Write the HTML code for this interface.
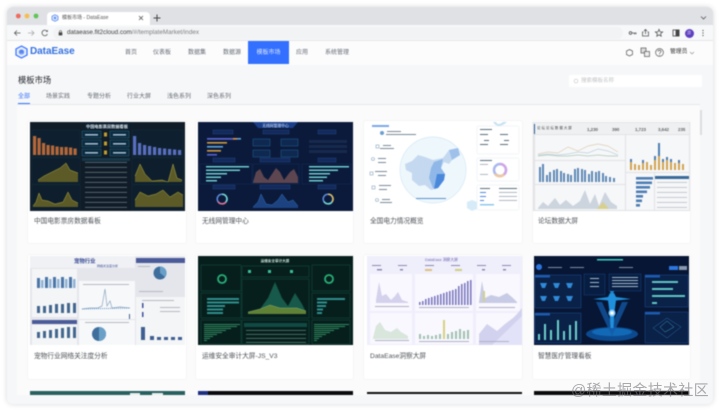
<!DOCTYPE html>
<html lang="zh"><head><meta charset="utf-8"><title>模板市场 - DataEase</title>
<style>
html,body{margin:0;padding:0;width:720px;height:412px;overflow:hidden;background:#fff}
body{font-family:"Liberation Sans","Noto Sans CJK SC",sans-serif;position:relative}
#w{position:absolute;left:7px;top:7px;width:706px;height:397px;border-radius:6px;background:#f6f7f8;box-shadow:0 0 6px rgba(0,0,0,.16);overflow:hidden;filter:blur(.45px)}
#o{position:absolute;left:-7px;top:-7px;width:720px;height:412px}
.a{position:absolute;white-space:nowrap;line-height:1}
.n{font-size:6px;color:#646a73;top:50px}
.t{font-size:6px;color:#646a73;top:94px}
.c{position:absolute;background:#fff;box-shadow:0 0 2px rgba(0,0,0,.07);border-radius:2px}
.l{position:absolute;font-size:6.7px;line-height:1;color:#4e5358;white-space:nowrap}
svg.h{position:absolute;display:block}
</style></head><body>
<div id="w"><div id="o">
<!-- tab strip -->
<div class="a" style="left:7px;top:7px;width:706px;height:18px;background:#dfe1e5"></div>
<svg class="h" style="left:14px;top:12px" width="28" height="8"><circle cx="4.3" cy="4" r="2.4" fill="#ee6a5f"/><circle cx="13" cy="4" r="2.4" fill="#f5bd4f"/><circle cx="22" cy="4" r="2.4" fill="#61c454"/></svg>
<div class="a" style="left:47px;top:11.500px;width:103px;height:13.500px;background:#fff;border-radius:4px 4px 0 0"></div>
<svg class="h" style="left:51px;top:14px" width="8" height="8" viewBox="0 0 8 8"><path d="M4 .7 7 2.300V5.700L4 7.300 1 5.700V2.300Z" fill="#dbe7ff" stroke="#5a8bf0" stroke-width=".8"/><circle cx="4" cy="4" r="1.200" fill="#5a8bf0"/></svg>
<div class="a" style="left:62px;top:16px;font-size:5px;color:#555">模板市场 - DataEase</div>
<svg class="h" style="left:138px;top:15px" width="6" height="6"><path d="M1 1 5 5M5 1 1 5" stroke="#555" stroke-width=".8"/></svg>
<svg class="h" style="left:153px;top:14px" width="8" height="8"><path d="M4 .5V7.500M.5 4H7.500" stroke="#444" stroke-width="1"/></svg>
<svg class="h" style="left:700px;top:15px" width="7" height="6"><path d="M1 1.500 3.500 4 6 1.500" fill="none" stroke="#555" stroke-width=".8"/></svg>
<!-- toolbar -->
<div class="a" style="left:7px;top:25px;width:706px;height:15px;background:#f7f8f9"></div>
<div class="a" style="left:7px;top:40px;width:706px;height:1px;background:#e6e7e9"></div>
<svg class="h" style="left:12px;top:28px" width="40" height="10" viewBox="0 0 40 10" fill="none"><path d="M8.500 5H2.500M5 2.500 2.500 5 5 7.500" stroke="#555" stroke-width=".8"/><path d="M16 5H22M19.500 2.500 22 5 19.500 7.500" stroke="#aaa" stroke-width=".8"/><path d="M35 3.200A2.800 2.800 0 1 0 35.400 6" stroke="#555" stroke-width=".8"/><path d="M35.800 1.800V3.900H33.700Z" fill="#555"/></svg>
<div class="a" style="left:53px;top:26.500px;width:570px;height:12px;background:#f1f3f4;border-radius:6px"></div>
<svg class="h" style="left:58px;top:29.500px" width="5" height="6" viewBox="0 0 5 6"><rect x=".7" y="2.400" width="3.600" height="3" fill="#444"/><path d="M1.500 2.500V1.500A1 1 0 0 1 3.500 1.500V2.500" fill="none" stroke="#444" stroke-width=".6"/></svg>
<div class="a" style="left:67px;top:30px;font-size:6.300px;color:#3f3f3f">dataease.fit2cloud.com<span style="color:#7c7f83">/#/templateMarket/index</span></div>
<svg class="h" style="left:628px;top:28px" width="82" height="10" viewBox="0 0 82 10" fill="none" stroke="#555" stroke-width=".8"><circle cx="2.500" cy="5" r="1.300"/><path d="M3.800 5H8.500M6.500 5V6.500M8 5V6.200"/><path d="M15.500 4H14.500V8H20.500V4H19.500M17.500 6V1.500M16 3 17.500 1.500 19 3"/><path d="M31 1.400 32 3.800 34.600 4 32.600 5.700 33.200 8.200 31 6.900 28.800 8.200 29.400 5.700 27.400 4 30 3.800Z"/><rect x="45" y="2" width="6" height="6" stroke="#444"/><rect x="48" y="2" width="3" height="6" fill="#444" stroke="#444"/></svg>
<div class="a" style="left:684.500px;top:28.500px;width:9px;height:9px;border-radius:50%;background:#5e3fc0"></div>
<div class="a" style="left:687px;top:31px;font-size:4px;color:#d8d0f5">游</div>
<svg class="h" style="left:701px;top:29px" width="4" height="8"><circle cx="2" cy="1.500" r=".6" fill="#444"/><circle cx="2" cy="4" r=".6" fill="#444"/><circle cx="2" cy="6.500" r=".6" fill="#444"/></svg>
<!-- nav -->
<div class="a" style="left:7px;top:41px;width:706px;height:24px;background:#fcfcfd"></div>
<svg class="h" style="left:15px;top:45px" width="13" height="14" viewBox="0 0 13 14"><path d="M6.500 1 12 4V10L6.500 13 1 10V4Z" fill="#e8efff" stroke="#3370ff" stroke-width="1.200"/><circle cx="6.500" cy="7" r="2.800" fill="#7ea6f8"/><path d="M4.500 6.500 6.500 5.500 8.500 6.500M4.500 8 6.500 7 8.500 8" stroke="#2a5fe0" stroke-width=".6" fill="none"/></svg>
<div class="a" style="left:30px;top:47px;font-size:10px;font-weight:700;color:#3370e0;letter-spacing:-.05px;font-family:'Liberation Sans',sans-serif">DataEase</div>
<div class="a n" style="left:125px">首页</div>
<div class="a n" style="left:153px">仪表板</div>
<div class="a n" style="left:188px">数据集</div>
<div class="a n" style="left:223px">数据源</div>
<div class="a" style="left:248px;top:41px;width:41px;height:23px;background:#3370ff"></div>
<div class="a n" style="left:256.500px;color:#dbe6ff">模板市场</div>
<div class="a n" style="left:296px">应用</div>
<div class="a n" style="left:325px">系统管理</div>
<svg class="h" style="left:624px;top:47px" width="70" height="11" viewBox="0 0 70 11" fill="none" stroke="#555" stroke-width=".7"><path d="M5.500 2.500 8.500 4V7.500L5.500 9 2.500 7.500V4Z"/><rect x="17" y="1" width="5" height="5" fill="#ddd"/><rect x="20.500" y="4.500" width="5" height="5" fill="#eee"/><circle cx="35.500" cy="5.500" r="3.900"/><path d="M34 4.500C34 2.800 37 2.800 37 4.500 37 5.500 35.500 5.500 35.500 7M35.500 7.800V8.500"/></svg>
<div class="a" style="left:670px;top:50px;font-size:5.800px;color:#333">管理员</div>
<svg class="h" style="left:689px;top:50.500px" width="6" height="4"><path d="M1 1 3 3 5 1" fill="none" stroke="#888" stroke-width=".6"/></svg>
<!-- title -->
<div class="a" style="left:18px;top:76px;font-size:8.300px;color:#24282e">模板市场</div>
<div class="a" style="left:569px;top:75px;width:133px;height:12px;background:#fff;border-radius:1px"></div>
<svg class="h" style="left:573px;top:78px" width="6" height="6"><circle cx="3" cy="3" r="1.900" fill="none" stroke="#bbb" stroke-width=".5"/></svg>
<div class="a" style="left:581px;top:78.500px;font-size:5.500px;color:#c3c5c8">搜索模板名称</div>
<div class="a t" style="left:18px;color:#3370ff">全部</div>
<div class="a t" style="left:46px">场景实践</div>
<div class="a t" style="left:87px">专题分析</div>
<div class="a t" style="left:127px">行业大屏</div>
<div class="a t" style="left:167px">浅色系列</div>
<div class="a t" style="left:207px">深色系列</div>
<div class="a" style="left:17px;top:104px;width:683px;height:1px;background:#e6e8ea"></div>
<div class="a" style="left:18px;top:103px;width:12px;height:1.200px;background:#3370ff"></div>
<div class="a" style="left:700px;top:110px;width:2px;height:25px;background:#dcdddf"></div>
<!-- content panel -->
<div class="a" style="left:17px;top:105px;width:683px;height:290px;background:#fbfbfc"></div>
<!-- cards -->
<div class="c" style="left:28px;top:121px;width:158px;height:122px"></div>
<div class="c" style="left:196px;top:121px;width:157px;height:122px"></div>
<div class="c" style="left:364px;top:121px;width:158px;height:122px"></div>
<div class="c" style="left:533px;top:121px;width:157px;height:122px"></div>
<div class="c" style="left:28px;top:255px;width:158px;height:124px"></div>
<div class="c" style="left:196px;top:255px;width:157px;height:124px"></div>
<div class="c" style="left:364px;top:255px;width:158px;height:124px"></div>
<div class="c" style="left:533px;top:255px;width:157px;height:124px"></div>

<!-- thumb 1 -->
<svg class="h" style="left:30px;top:122px" width="155" height="89" viewBox="0 0 155 89">
<rect width="155" height="89" fill="#101c28"/>
<rect x="55" y="1" width="45" height="6" fill="#0c2030"/>
<text x="77" y="6" font-size="4.200" fill="#dfe8ef" text-anchor="middle" font-weight="700">中国电影票房数据看板</text>
<rect x="2" y="8" width="48" height="27" fill="#0e2030" stroke="#16384a" stroke-width=".3"/>
<rect x="102" y="8" width="51" height="27" fill="#0e2030" stroke="#16384a" stroke-width=".3"/>
<rect x="2" y="36" width="48" height="26" fill="#0e1e2c" stroke="#16384a" stroke-width=".3"/>
<rect x="2" y="63" width="48" height="25" fill="#0e1e2c" stroke="#16384a" stroke-width=".3"/>
<rect x="102" y="36" width="51" height="26" fill="#0e1e2c" stroke="#16384a" stroke-width=".3"/>
<rect x="102" y="63" width="51" height="25" fill="#0e1e2c" stroke="#16384a" stroke-width=".3"/>
<g fill="#b5683a"><rect x="3" y="14" width="3.200" height="19"/><rect x="7.500" y="16" width="3.200" height="17"/><rect x="12" y="21" width="3.200" height="12"/><rect x="16.500" y="23" width="3.200" height="10"/><rect x="21" y="23.500" width="3.200" height="9.500"/><rect x="25.500" y="24.500" width="3.200" height="8.500"/><rect x="30" y="25" width="3.200" height="8"/><rect x="34.500" y="25" width="3.200" height="8"/><rect x="39" y="25.500" width="3.200" height="7.500"/><rect x="43.500" y="26.500" width="3.200" height="6.500"/></g>
<g fill="#5a6fc0"><rect x="103" y="14" width="3.200" height="19"/><rect x="108" y="21" width="3.200" height="12"/><rect x="113" y="23" width="3.200" height="10"/><rect x="118" y="24" width="3.200" height="9"/><rect x="123" y="25" width="3.200" height="8"/><rect x="128" y="26" width="3.200" height="7"/><rect x="133" y="26.500" width="3.200" height="6.500"/><rect x="138" y="27" width="3.200" height="6"/><rect x="143" y="27.500" width="3.200" height="5.500"/><rect x="148" y="28" width="3.200" height="5"/></g>
<g fill="#0c2a40" stroke="#2a7a90" stroke-width=".4"><rect x="52" y="9" width="19" height="7"/><rect x="80" y="9" width="19" height="7"/><rect x="52" y="18" width="19" height="7"/><rect x="80" y="18" width="19" height="7"/><rect x="52" y="27" width="19" height="7"/><rect x="80" y="27" width="19" height="7"/></g>
<g fill="#c0a030"><rect x="74" y="10.500" width="3" height="4"/><rect x="74" y="19.500" width="3" height="4"/><rect x="74" y="28.500" width="3" height="4"/></g>
<g fill="#9fb8c8"><rect x="55" y="12" width="13" height="1.600"/><rect x="83" y="12" width="13" height="1.600"/><rect x="55" y="21" width="13" height="1.600"/><rect x="83" y="21" width="13" height="1.600"/><rect x="55" y="30" width="13" height="1.600"/><rect x="83" y="30" width="13" height="1.600"/></g>
<path d="M8 58 14 54 22 50 30 46 36 41 40 48 48 51V60H8Z" fill="#5c5b28"/><path d="M8 58 14 54 22 50 30 46 36 41 40 48 48 51" fill="none" stroke="#b0a840" stroke-width=".5"/>
<path d="M3 84 6 80 9 71 12 78 18 79 25 82 33 80 38 70 42 78 48 81V85H3Z" fill="#5c5b28"/><path d="M3 84 6 80 9 71 12 78 18 79 25 82 33 80 38 70 42 78 48 81" fill="none" stroke="#b0a840" stroke-width=".5"/>
<path d="M105 54 110 42 115 52 122 59 132 58 138 60 143 42 147 56 152 58V60H105Z" fill="#5c5b28"/><path d="M105 54 110 42 115 52 122 59 132 58 138 60 143 42 147 56 152 58" fill="none" stroke="#b0a840" stroke-width=".5"/>
<path d="M105 78 110 70 118 74 126 72 133 68 140 75 148 70 153 73V85H105Z" fill="#5c5b28"/><path d="M105 78 110 70 118 74 126 72 133 68 140 75 148 70 153 73" fill="none" stroke="#b0a840" stroke-width=".5"/>
<rect x="52" y="36" width="48" height="3" fill="#16384a"/>
<g fill="#6e7e88"><rect x="55" y="40" width="42" height=".7"/><rect x="55" y="45" width="42" height=".7"/><rect x="55" y="50" width="42" height=".7"/><rect x="55" y="55" width="42" height=".7"/><rect x="55" y="60" width="42" height=".7"/><rect x="55" y="65" width="42" height=".7"/><rect x="55" y="70" width="42" height=".7"/><rect x="55" y="75" width="42" height=".7"/><rect x="55" y="80" width="42" height=".7"/><rect x="55" y="85" width="42" height=".7"/></g>
</svg>
<!-- thumb 2 -->
<svg class="h" style="left:198px;top:122px" width="155" height="89" viewBox="0 0 155 89">
<rect width="155" height="89" fill="#0b1a3a"/>
<path d="M55 0H100L95 6H60Z" fill="#1b3f88"/>
<text x="77.500" y="5" font-size="3.800" fill="#d4e4ff" text-anchor="middle">无线网管理中心</text>
<g fill="#142a5c" stroke="#2a5aa8" stroke-width=".3"><rect x="15" y="8" width="20" height="4"/><rect x="65" y="8" width="26" height="4"/><rect x="120" y="8" width="18" height="4"/><rect x="15" y="36" width="22" height="4"/><rect x="62" y="36" width="30" height="4"/><rect x="120" y="36" width="18" height="4"/><rect x="15" y="63" width="22" height="4"/><rect x="62" y="63" width="30" height="4"/><rect x="120" y="63" width="18" height="4"/></g>
<g><rect x="9" y="16" width="34" height="1.600" fill="#5ea5d8"/><rect x="9" y="16" width="26" height="1.600" fill="#5a60d0"/><rect x="35" y="16" width="4" height="1.600" fill="#e09040"/><rect x="9" y="20" width="20" height="1.600" fill="#d09a40"/><rect x="9" y="24" width="16" height="1.600" fill="#5ea5d8"/><rect x="9" y="28" width="14" height="1.600" fill="#d09a40"/><rect x="9" y="32" width="10" height="1.600" fill="#5a60d0"/></g>
<g fill="#0e2850" stroke="#2c70a8" stroke-width=".4"><rect x="55" y="17" width="17" height="7"/><rect x="83" y="17" width="17" height="7"/><rect x="55" y="28" width="17" height="7"/><rect x="83" y="28" width="17" height="7"/></g>
<g fill="#16294f"><rect x="111" y="18" width="38" height="3"/><rect x="111" y="23" width="38" height="3"/><rect x="111" y="28" width="38" height="3"/></g>
<g fill="#6fcdd0"><rect x="8" y="44" width="43" height="1.500"/><rect x="8" y="47.500" width="34" height="1.500"/><rect x="8" y="51" width="21" height="1.500"/><rect x="8" y="54.500" width="15" height="1.500"/><rect x="8" y="58" width="11" height="1.500"/><rect x="111" y="44" width="40" height="1.500"/><rect x="111" y="47.500" width="29" height="1.500"/><rect x="111" y="51" width="21" height="1.500"/><rect x="111" y="54.500" width="18" height="1.500"/><rect x="111" y="58" width="14" height="1.500"/></g>
<path d="M55 60 58 50 62 47 66 55 70 58 74 52 78 46 82 50 86 58 92 50 96 47 100 55V61H55Z" fill="#5e4650"/>
<path d="M55 85 60 80 63 72 68 82 74 83 80 78 84 72 90 80 95 78 100 84V86H55Z" fill="#1c4280"/>
<path d="M55 85 60 80 63 72 68 82 74 83 80 78 84 72 90 80 95 78 100 84" fill="none" stroke="#3a80d0" stroke-width=".4"/>
<circle cx="24" cy="77" r="4.800" fill="none" stroke="#5e8de0" stroke-width="1.500"/><path d="M24 72.200A4.800 4.800 0 0 1 28 80" fill="none" stroke="#70dcd0" stroke-width="1.500"/><path d="M28 80A4.800 4.800 0 0 1 20 79.500" fill="none" stroke="#e07090" stroke-width="1.500"/>
<circle cx="130" cy="77" r="4.800" fill="none" stroke="#5e8de0" stroke-width="1.500"/><path d="M130 72.200A4.800 4.800 0 0 1 134 80" fill="none" stroke="#e0c060" stroke-width="1.500"/><path d="M134 80A4.800 4.800 0 0 1 126 79.500" fill="none" stroke="#70dcd0" stroke-width="1.500"/>
<rect x="2" y="42" width="52" height="20" fill="none" stroke="#1a3a70" stroke-width=".3"/><rect x="55" y="42" width="46" height="20" fill="none" stroke="#1a3a70" stroke-width=".3"/><rect x="104" y="42" width="49" height="20" fill="none" stroke="#1a3a70" stroke-width=".3"/>
</svg>
<!-- thumb 3 -->
<svg class="h" style="left:365px;top:122px" width="156" height="89" viewBox="0 0 156 89">
<rect width="156" height="89" fill="#fff"/>
<circle cx="68" cy="48" r="33" fill="#eef7fc" stroke="#d5e9f5" stroke-width=".7"/>
<path d="M40 42 47 39 53 33 60 35 68 38 78 36 84 28 93 26 95 33 87 38 84 42 79 40 76 46 80 52 79 58 73 66 66 68 60 63 54 64 47 58 47 51 41 48Z" fill="#c4d9f0"/>
<path d="M69 40 78 37 76 46 80 52 79 58 73 66 68 66 64 56 66 46Z" fill="#8fb8e8"/>
<path d="M72 52 80 52 79 58 73 66 69 67Z" fill="#4a88dc"/>
<path d="M84 28 93 26 95 33 87 38Z" fill="#9fc0ea"/>
<rect x="7" y="3" width="17" height="2" fill="#7aa8e8"/>
<circle cx="17" cy="11" r="2" fill="#6a9fd0"/>
<g fill="#7a8a99"><rect x="22" y="9" width="14" height="1"/><rect x="21" y="12" width="30" height="1"/><rect x="18" y="23" width="8" height="1"/><rect x="15" y="26" width="14" height="1"/><rect x="13" y="36" width="8" height="1"/><rect x="13" y="40" width="8" height="1"/><rect x="10" y="49" width="12" height="1"/><rect x="13" y="53" width="8" height="1"/><rect x="14" y="63" width="12" height="1"/><rect x="14" y="67" width="8" height="1"/><rect x="17" y="77" width="8" height="1"/><rect x="15" y="80" width="12" height="1"/></g>
<g fill="none" stroke="#8aa4bc" stroke-width=".6"><rect x="11" y="23" width="3" height="3"/><circle cx="8" cy="37" r="1.500"/><rect x="5" y="50" width="3" height="3"/><rect x="7" y="64" width="3" height="3"/><circle cx="12" cy="78" r="1.500"/></g>
<rect x="112" y="4" width="42" height="28" rx="1.500" fill="#fff" stroke="#e4ecf2" stroke-width=".5"/>
<rect x="112" y="36" width="42" height="23" rx="1.500" fill="#fff" stroke="#e4ecf2" stroke-width=".5"/>
<rect x="112" y="63" width="42" height="25" rx="1.500" fill="#fff" stroke="#e4ecf2" stroke-width=".5"/>
<g fill="#5a6e80"><rect x="115" y="7" width="12" height="1"/><rect x="115" y="12" width="8" height="1"/><rect x="135" y="12" width="8" height="1"/><rect x="119" y="18" width="5" height="1"/><rect x="139" y="18" width="5" height="1"/><rect x="115" y="22" width="8" height="1"/><rect x="135" y="22" width="8" height="1"/><rect x="115" y="38" width="12" height="1"/><rect x="115" y="66" width="10" height="1"/><rect x="134" y="66" width="18" height="1"/></g>
<g fill="#4e88d8"><rect x="115" y="70" width="6" height="1"/><rect x="115" y="74" width="6" height="1"/><rect x="115" y="78" width="4" height="1"/></g>
<g fill="#9aa6b2"><rect x="134" y="70" width="18" height=".8"/><rect x="134" y="74" width="18" height=".8"/><rect x="134" y="78" width="18" height=".8"/><rect x="115" y="42" width="8" height=".8"/><rect x="115" y="52" width="8" height=".8"/></g>
<rect x="115" y="82" width="14" height="1.500" fill="#8fc8ee"/>
<circle cx="135" cy="48" r="6" fill="none" stroke="#a9b8f0" stroke-width="2.500"/><path d="M135 42A6 6 0 0 1 139 52.500" fill="none" stroke="#d0a6e8" stroke-width="2.500"/><path d="M130 52A6 6 0 0 0 139 52.500" fill="none" stroke="#f0c8a0" stroke-width="2.500"/>
<path d="M107 78 112 80 112 87 107 89 102 86 102 80Z" fill="#d6ebf7"/>
<path d="M128 0Q133 8 142 0H138Q133 4 131 0Z" fill="#c7e2f2"/>
<rect x="51" y="76" width="30" height="1" fill="#5a90cc"/>
</svg>
<!-- thumb 4 -->
<svg class="h" style="left:533px;top:122px" width="157" height="89" viewBox="0 0 157 89">
<rect width="157" height="89" fill="#e1e3e5"/>
<rect x="1" y="1" width="155" height="11" fill="#eef0f2"/><rect x="1" y="2" width="1" height="10" fill="#2d5c96"/>
<text x="4" y="7" font-size="3.500" fill="#444">论 坛 论 坛 数 据 大 屏</text>
<g fill="#666" font-size="4.400" font-weight="700"><text x="54" y="9">1,230</text><text x="79" y="9">390</text><text x="102" y="9">1,723</text><text x="125" y="9">3,642</text><text x="145" y="9">235</text></g>
<rect x="2" y="13" width="90" height="25" fill="#f6f7f8"/><rect x="93" y="13" width="63" height="37" fill="#f6f7f8"/><rect x="2" y="39" width="90" height="23" fill="#f6f7f8"/><rect x="2" y="63" width="90" height="25" fill="#f6f7f8"/><rect x="93" y="51" width="28" height="37" fill="#f6f7f8"/><rect x="122" y="51" width="34" height="37" fill="#f6f7f8"/>
<path d="M5 32 15 30 25 31 35 25 45 29 55 24 65 22 75 24 85 30" fill="none" stroke="#c8a878" stroke-width=".4"/><path d="M5 33 15 32 25 33 35 32 45 30 55 31 65 27 75 29 85 33" fill="none" stroke="#8ab0c8" stroke-width=".4"/><path d="M5 34 15 33 25 34 35 34 45 33 55 34 65 33 75 34 85 34" fill="none" stroke="#70a080" stroke-width=".4"/>
<g fill="#5e88b6"><rect x="6" y="45" width="2" height="15"/><rect x="9" y="42" width="2" height="18"/><rect x="13" y="53" width="2" height="7"/><rect x="16" y="50" width="2" height="10"/><rect x="20" y="48" width="2" height="12"/><rect x="23" y="47" width="2" height="13"/><rect x="27" y="49" width="2" height="11"/><rect x="30" y="51" width="2" height="9"/><rect x="34" y="52" width="2" height="8"/><rect x="37" y="53" width="2" height="7"/><rect x="41" y="47" width="2" height="13"/><rect x="44" y="46" width="2" height="14"/><rect x="48" y="47" width="2" height="13"/><rect x="51" y="48" width="2" height="12"/><rect x="55" y="52" width="2" height="8"/><rect x="58" y="49" width="2" height="11"/><rect x="62" y="50" width="2" height="10"/><rect x="65" y="49" width="2" height="11"/><rect x="69" y="51" width="2" height="9"/><rect x="72" y="54" width="2" height="6"/><rect x="76" y="55" width="2" height="5"/><rect x="80" y="56" width="2" height="4"/></g>
<path d="M5 86 10 80 15 84 22 76 27 83 33 78 40 84 47 79 52 68 57 82 62 72 66 84 72 70 78 80 84 84V87H5Z" fill="#ccd4de"/><path d="M64 87 70 80 76 87Z" fill="#d7d08c"/>
<g fill="#d2a24e"><rect x="97" y="40" width="2" height="8"/><rect x="101" y="42" width="2" height="6"/><rect x="105" y="43" width="2" height="5"/><rect x="109" y="41" width="2" height="7"/><rect x="113" y="40" width="2" height="8"/><rect x="117" y="43" width="2" height="5"/><rect x="121" y="38" width="2" height="10"/><rect x="125" y="34" width="2" height="14"/><rect x="129" y="40" width="2" height="8"/><rect x="133" y="38" width="2" height="10"/><rect x="137" y="40" width="2" height="8"/><rect x="141" y="41" width="2" height="7"/><rect x="145" y="41" width="2" height="7"/><rect x="149" y="42" width="2" height="6"/></g>
<g fill="#4d7eb4"><rect x="97" y="37" width="2" height="3"/><rect x="109" y="38" width="2" height="3"/><rect x="121" y="34" width="2" height="4"/><rect x="125" y="21" width="2" height="13"/><rect x="129" y="37" width="2" height="3"/><rect x="133" y="35" width="2" height="3"/><rect x="137" y="37" width="2" height="3"/><rect x="145" y="38" width="2" height="3"/></g>
<g fill="#4d7eb4"><rect x="103" y="55" width="17" height="2.600"/><rect x="103" y="59.500" width="16" height="2.600"/><rect x="103" y="64" width="14" height="2.600"/><rect x="103" y="68.500" width="11" height="2.600"/><rect x="103" y="73" width="7" height="2.600"/><rect x="103" y="77.500" width="6" height="2.600"/><rect x="103" y="82" width="4" height="2.600"/></g>
<rect x="122" y="54" width="34" height="3" fill="#3a6a9c"/>
<g fill="#b8bec4"><rect x="124" y="60" width="30" height=".8"/><rect x="124" y="65" width="30" height=".8"/><rect x="124" y="70" width="30" height=".8"/><rect x="124" y="75" width="30" height=".8"/><rect x="124" y="80" width="30" height=".8"/><rect x="124" y="85" width="30" height=".8"/></g>
</svg>
<!-- thumb 5 -->
<svg class="h" style="left:30px;top:256px" width="155" height="89" viewBox="0 0 155 89">
<rect width="155" height="89" fill="#e4e6ec"/>
<rect x="0" y="0" width="105" height="12" fill="#f0f1f4"/>
<text x="44" y="7" font-size="5.400" font-weight="700" fill="#3d4f99">宠物行业</text><text x="67" y="11" font-size="3" fill="#3d4f99">网络关注度分析</text>
<rect x="106" y="2" width="49" height="5" fill="#4b5a98"/>
<rect x="2" y="13" width="45" height="48" fill="#f4f5f7"/><rect x="2" y="64" width="45" height="4" fill="#4b5a98"/><rect x="2" y="69" width="45" height="20" fill="#f4f5f7"/>
<rect x="49" y="25" width="56" height="38" fill="#f7f8f9"/><rect x="49" y="64" width="56" height="25" fill="#f7f8f9"/>
<rect x="106" y="41" width="49" height="48" fill="#f4f5f7"/>
<g fill="#4a76a8"><rect x="7" y="22" width="3" height="10"/><rect x="15" y="21" width="3" height="11"/><rect x="23" y="21" width="3" height="11"/><rect x="31" y="21" width="3" height="11"/><rect x="39" y="21" width="3" height="11"/></g>
<g fill="#8fb4d6"><rect x="11" y="24" width="2.500" height="8"/><rect x="19" y="23" width="2.500" height="9"/><rect x="27" y="23" width="2.500" height="9"/><rect x="35" y="23" width="2.500" height="9"/><rect x="43" y="23" width="2.500" height="9"/></g>
<g fill="#43668f"><rect x="7" y="50" width="3" height="7"/><rect x="13" y="50" width="3" height="7"/><rect x="19" y="49" width="3" height="8"/><rect x="25" y="48" width="3" height="9"/><rect x="31" y="48" width="3" height="9"/><rect x="37" y="47" width="3" height="10"/><rect x="43" y="47" width="3" height="10"/></g>
<g fill="#43668f"><rect x="7" y="76" width="3" height="6"/><rect x="13" y="75" width="3" height="7"/><rect x="19" y="74" width="3" height="8"/><rect x="25" y="73" width="3" height="9"/><rect x="31" y="72" width="3" height="10"/><rect x="37" y="71" width="3" height="11"/><rect x="43" y="71" width="3" height="11"/></g>
<path d="M52 53 60 52 68 52 72 50 75 33 77 50 80 45 82 52 90 51 100 52" fill="none" stroke="#8aa6c2" stroke-width=".7"/><path d="M52 53 100 52" stroke="#5c8ec4" stroke-width="1" stroke-dasharray="1 1"/>
<circle cx="69" cy="78" r="7" fill="#3f6d9c"/><path d="M69 71A7 7 0 0 1 69 85Z" fill="#6aa0c8"/>
<circle cx="130" cy="17" r="6.500" fill="#3f6d9c"/><path d="M130 10.500A6.500 6.500 0 0 1 135 21L130 17Z" fill="#6aa0c8"/>
<g fill="#b5bac2"><rect x="108" y="10" width="12" height="1"/><rect x="53" y="28" width="46" height="1"/><rect x="55" y="66" width="44" height="1"/><rect x="109" y="35" width="24" height="1"/><rect x="112" y="44" width="32" height="1"/><rect x="130" y="51" width="20" height="1"/><rect x="130" y="55" width="20" height="1"/></g>
<g fill="#3f5f92"><rect x="111" y="71" width="4" height="13"/><rect x="120" y="80" width="4" height="4"/><rect x="127" y="81" width="4" height="3"/><rect x="134" y="81" width="4" height="3"/><rect x="141" y="81" width="4" height="3"/><rect x="148" y="81" width="4" height="3"/></g>
<rect x="99" y="58" width="1" height="5" fill="#3f5f92"/><rect x="112" y="47" width="1.500" height="5" fill="#3d4f99"/><rect x="112" y="56" width="1.500" height="5" fill="#3d4f99"/>
</svg>
<!-- thumb 6 -->
<svg class="h" style="left:198px;top:256px" width="155" height="89" viewBox="0 0 155 89">
<rect width="155" height="89" fill="#071f1c"/>
<text x="77" y="6" font-size="3.600" fill="#cfe8dc" text-anchor="middle" font-weight="700">运维安全审计大屏</text>
<g fill="none" stroke="#175a50" stroke-width=".4"><rect x="3" y="9" width="40" height="26"/><rect x="44" y="10" width="67" height="11"/><rect x="114" y="9" width="38" height="26"/><rect x="3" y="37" width="40" height="25"/><rect x="44" y="23" width="67" height="39"/><rect x="114" y="37" width="38" height="25"/><rect x="3" y="64" width="40" height="24"/><rect x="44" y="64" width="67" height="24"/><rect x="114" y="64" width="38" height="24"/></g>
<circle cx="24" cy="23" r="4" fill="none" stroke="#28b078" stroke-width="1.800"/><circle cx="131" cy="23" r="4" fill="none" stroke="#28b078" stroke-width="1.800"/>
<g fill="#2e8e8c"><rect x="9" y="42" width="32" height="2"/><rect x="9" y="45.500" width="32" height="2"/><rect x="9" y="49" width="18" height="2"/><rect x="9" y="52.500" width="16" height="2"/><rect x="9" y="56" width="16" height="2"/><rect x="119" y="42" width="28" height="2"/><rect x="119" y="45.500" width="10" height="2"/><rect x="119" y="49" width="9" height="2"/><rect x="119" y="52.500" width="6" height="2"/><rect x="119" y="56" width="5" height="2"/></g>
<path d="M50 56 62 53 70 42 77 26 84 42 90 50 97 37 104 48 108 56V58H50Z" fill="#17594a"/><path d="M50 56 62 53 72 49 82 52 90 52 99 52 108 55V58H50Z" fill="#5f8236"/>
<path d="M50 56 62 53 72 49 82 52 90 52 99 52 108 55" fill="none" stroke="#bcd090" stroke-width=".3"/>
<g fill="#2f8a60"><rect x="6" y="68" width="36" height="1"/><rect x="6" y="70" width="33" height="1"/><rect x="6" y="72" width="27" height="1"/><rect x="6" y="74" width="22" height="1"/><rect x="6" y="76" width="18" height="1"/><rect x="6" y="78" width="13" height="1"/><rect x="6" y="80" width="9" height="1"/><rect x="6" y="82" width="6" height="1"/><rect x="6" y="84" width="3" height="1"/><rect x="116" y="68" width="35" height="1"/><rect x="116" y="70" width="31" height="1"/><rect x="116" y="72" width="25" height="1"/><rect x="116" y="74" width="20" height="1"/><rect x="116" y="76" width="16" height="1"/><rect x="116" y="78" width="12" height="1"/><rect x="116" y="80" width="8" height="1"/><rect x="116" y="82" width="5" height="1"/><rect x="116" y="84" width="3" height="1"/></g>
<rect x="46" y="67" width="63" height="4" fill="#114a44"/>
<g fill="#5e8a80"><rect x="48" y="74" width="60" height=".7"/><rect x="48" y="78" width="60" height=".7"/><rect x="48" y="82" width="60" height=".7"/><rect x="48" y="86" width="60" height=".7"/></g>
<g fill="#3ac09a"><rect x="50" y="14" width="3" height="3"/><rect x="70" y="14" width="3" height="3"/><rect x="92" y="14" width="3" height="3"/></g>
</svg>
<!-- thumb 7 -->
<svg class="h" style="left:367px;top:256px" width="155" height="89" viewBox="0 0 155 89">
<rect width="155" height="89" fill="#efeefb"/>
<text x="58" y="5" font-size="3.800" fill="#6d6ab0">DataEase 洞察大屏</text>
<g fill="#8a8ab0"><rect x="5" y="9" width="9" height="1"/><rect x="31" y="9" width="9" height="1"/><rect x="58" y="9" width="9" height="1"/><rect x="84" y="9" width="9" height="1"/><rect x="110" y="9" width="9" height="1"/><rect x="135" y="9" width="9" height="1"/><rect x="10" y="13" width="5" height="1.500"/><rect x="33" y="13" width="3" height="1.500"/><rect x="136" y="13" width="3" height="1.500"/><rect x="115" y="13" width="3" height="1.500"/></g>
<rect x="58" y="13" width="7" height="2" fill="#dcc080"/><rect x="88" y="13" width="7" height="2" fill="#cfd080"/>
<g fill="#f9f8fe"><rect x="3" y="18" width="42" height="37"/><rect x="48" y="18" width="58" height="37"/><rect x="109" y="18" width="44" height="37"/><rect x="3" y="57" width="42" height="31"/><rect x="48" y="57" width="58" height="31"/><rect x="109" y="57" width="44" height="31"/></g>
<path d="M9 44 12 26 15 40 19 38 24 44 28 40 31 36 35 44 41 46V47H9Z" fill="#d4d1ec"/>
<g fill="#7c78c0"><rect x="52" y="46" width="1.600" height="3"/><rect x="55" y="45" width="1.600" height="4"/><rect x="58" y="43" width="1.600" height="6"/><rect x="61" y="42" width="1.600" height="7"/><rect x="64" y="41" width="1.600" height="8"/><rect x="67" y="40" width="1.600" height="9"/><rect x="70" y="39" width="1.600" height="10"/><rect x="73" y="38" width="1.600" height="11"/><rect x="76" y="37" width="1.600" height="12"/><rect x="79" y="36" width="1.600" height="13"/><rect x="82" y="35" width="1.600" height="14"/><rect x="85" y="34" width="1.600" height="15"/><rect x="88" y="33" width="1.600" height="16"/><rect x="91" y="30" width="1.600" height="19"/><rect x="94" y="28" width="1.600" height="21"/><rect x="97" y="27" width="1.600" height="22"/><rect x="100" y="25" width="1.600" height="24"/><rect x="103" y="24" width="1.600" height="25"/></g>
<path d="M112 46 115 25 118 42 124 39 132 41 140 37 146 42 150 46V47H112Z" fill="#c8cbe6"/><rect x="116" y="35" width="2" height="11" fill="#cfd090"/>
<path d="M6 82 9 70 13 66 18 74 24 76 30 72 34 76 41 80V83H6Z" fill="#d8e6dc"/>
<g fill="#9fc0b0"><rect x="52" y="78" width="2" height="5"/><rect x="56" y="80" width="2" height="3"/><rect x="60" y="79" width="2" height="4"/><rect x="64" y="80" width="2" height="3"/><rect x="68" y="79" width="2" height="4"/><rect x="72" y="78" width="2" height="5"/><rect x="80" y="78" width="2" height="5"/><rect x="84" y="76" width="2" height="7"/><rect x="88" y="75" width="2" height="8"/><rect x="92" y="73" width="2" height="10"/><rect x="96" y="75" width="2" height="8"/><rect x="100" y="74" width="2" height="9"/></g>
<rect x="76" y="64" width="2" height="19" fill="#d6d080"/>
<path d="M112 78 120 68 130 75 138 68 146 62 150 58 155 52V89H112Z" fill="#d2d2ee"/><path d="M125 89 155 60V89Z" fill="#e2e2f8"/>
<g fill="#b0b0c8"><rect x="8" y="50" width="34" height="1"/><rect x="52" y="51" width="50" height="1"/><rect x="112" y="51" width="36" height="1"/><rect x="8" y="84" width="34" height="1"/><rect x="52" y="85" width="50" height="1"/><rect x="112" y="85" width="30" height="1"/></g>
</svg>
<!-- thumb 8 -->
<svg class="h" style="left:534px;top:256px" width="155" height="89" viewBox="0 0 155 89">
<rect width="155" height="89" fill="#071634"/>
<rect x="63" y="3" width="26" height="1.500" fill="#3fd0c8"/>
<rect x="135" y="10" width="9" height="4" fill="#2c76e0"/><rect x="145" y="10" width="8" height="4" fill="#8a98b0"/>
<circle cx="5" cy="11" r="3" fill="#2c76e0"/>
<g fill="#7e90a8"><rect x="14" y="11" width="14" height="1"/><rect x="36" y="11" width="14" height="1"/><rect x="85" y="11" width="14" height="1"/></g>
<g fill="#0a2148" stroke="#1c4c90" stroke-width=".5"><path d="M1 19H47V52H1Z"/><path d="M1 57H47V87H1Z"/><path d="M111 19H154V51H111Z"/><path d="M111 56H154V87H111Z"/></g>
<g fill="#1d5bb0"><rect x="1" y="19" width="15" height="2.500"/><rect x="1" y="57" width="15" height="2.500"/><rect x="111" y="19" width="15" height="2.500"/><rect x="111" y="56" width="15" height="2.500"/></g>
<g fill="#2f8ad8"><path d="M6 27H13L11 32H8Z"/><path d="M19 27H26L24 32H21Z"/><path d="M32 27H39L37 32H34Z"/><path d="M6 40H13L11 45H8Z"/><path d="M19 40H26L24 45H21Z"/><path d="M32 40H39L37 45H34Z"/></g>
<g fill="#70d0cc"><rect x="4" y="78" width="2" height="6"/><rect x="10" y="68" width="2" height="16"/><rect x="16" y="74" width="2" height="10"/><rect x="23" y="64" width="2" height="20"/><rect x="29" y="75" width="2" height="9"/><rect x="35" y="69" width="2" height="15"/><rect x="41" y="65" width="2" height="19"/></g>
<g fill="#60c8c4"><rect x="118" y="25" width="26" height="2"/><rect x="118" y="32" width="21" height="2"/><rect x="118" y="39" width="33" height="2"/><rect x="118" y="46" width="5" height="2"/></g>
<path d="M133 62 147 71 133 82 119 72Z" fill="none" stroke="#2c6aa8" stroke-width=".5"/><path d="M133 65 140 71 131 76 126 71Z" fill="none" stroke="#3fa0c0" stroke-width=".5"/>
<ellipse cx="78" cy="78" rx="26" ry="7" fill="#0c4a90"/><ellipse cx="78" cy="76" rx="20" ry="4" fill="#1578c8" opacity=".7"/>
<path d="M62 46 74 72 78 80 82 72 94 46 88 46 78 68 68 46Z" fill="#135ba8" opacity=".75"/>
<path d="M59 43 74 41 76 37H80L82 41 97 43 82 44.500 80.500 56 79.500 72H76.500L75.500 56 74 44.500Z" fill="#2090dc"/>
<circle cx="78" cy="35" r="2" fill="#2090dc"/>
<circle cx="78" cy="57" r="3.500" fill="#7fc8ff"/><circle cx="78" cy="57" r="1.800" fill="#fff"/>
<rect x="50" y="18" width="21" height="21" fill="#071e42" stroke="#1c4c90" stroke-width=".4"/><rect x="75" y="18" width="32" height="17" fill="#071e42" stroke="#1c4c90" stroke-width=".4"/>
<g fill="#a8bcd0"><rect x="78" y="21" width="26" height="1"/><rect x="78" y="24" width="26" height="1"/><rect x="78" y="27" width="26" height="1"/><rect x="78" y="30" width="26" height="1"/><rect x="56" y="22" width="9" height="1"/><rect x="56" y="26" width="9" height="1"/><rect x="56" y="30" width="9" height="1"/></g>
</svg>
<!-- labels -->
<div class="l" style="left:34px;top:218.500px">中国电影票房数据看板</div>
<div class="l" style="left:202px;top:218.500px">无线网管理中心</div>
<div class="l" style="left:370px;top:218.500px">全国电力情况概览</div>
<div class="l" style="left:538px;top:218.500px">论坛数据大屏</div>
<div class="l" style="left:34px;top:353.500px">宠物行业网络关注度分析</div>
<div class="l" style="left:202px;top:353.500px">运维安全审计大屏-JS_V3</div>
<div class="l" style="left:370px;top:353.500px">DataEase洞察大屏</div>
<div class="l" style="left:538px;top:353.500px">智慧医疗管理看板</div>
<!-- row 3 -->
<div class="a" style="left:30px;top:391px;width:155px;height:4px;background:#27605f"></div>
<div class="a" style="left:152px;top:393px;width:11px;height:2px;background:#e8eeee"></div>
<div class="a" style="left:130px;top:393px;width:10px;height:2px;background:#e8eeee"></div>
<div class="a" style="left:198px;top:391px;width:155px;height:4px;background:#0a0a0e"></div>
<div class="a" style="left:198px;top:391px;width:10px;height:4px;background:#1c2f80"></div>
<div class="a" style="left:367px;top:391.500px;width:155px;height:2.500px;background:#0e0e12"></div>
<div class="a" style="left:534px;top:390.500px;width:155px;height:4.500px;background:#0a0a0c"></div>
<div class="a" style="left:7px;top:395px;width:706px;height:9px;background:#f6f7f8"></div>
</div></div>
<div class="a" style="left:571px;top:383px;font-size:15px;color:rgba(120,120,125,.62);letter-spacing:.3px;filter:blur(.25px)">@稀土掘金技术社区</div>
</body></html>
